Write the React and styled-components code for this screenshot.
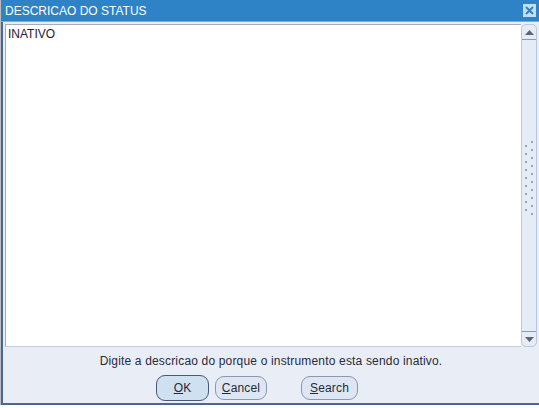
import React from "react";
import styled, { createGlobalStyle } from "styled-components";

const Global = createGlobalStyle`
  html, body { margin: 0; padding: 0; background: #ffffff; }
  body { font-family: "Liberation Sans", Arial, sans-serif; font-size: 12px; }
`;

const Window = styled.div`
  width: 539px;
  height: 405px;
  display: flex;
  flex-direction: column;
  box-sizing: border-box;
  border-left: 1px solid #b8bcc4;
`;

const TitleBar = styled.div`
  height: 21px;
  background: #2e82c6;
  display: flex;
  align-items: center;
  justify-content: space-between;
  padding: 0 3px 0 4px;
  color: #ffffff;
  font-size: 12px;
`;

const CloseBtn = styled.div`
  width: 13px;
  height: 13px;
  background: #c9ddf0;
  display: flex;
  align-items: center;
  justify-content: center;
`;

const Separator = styled.div`
  height: 1px;
  background: #9aa4ae;
`;

const Body = styled.div`
  flex: 1;
  background: #e9eef6;
  border-left: 2px solid #4a6693;
  border-bottom: 2px solid #4a6693;
  display: flex;
  flex-direction: column;
  padding: 2px 2px 0 2px;
`;

const EditRow = styled.div`
  display: flex;
  height: 323px;
`;

const TextBox = styled.div`
  flex: 1;
  background: #ffffff;
  border-top: 1px solid #a4acb8;
  border-left: 1px solid #a4acb8;
  border-bottom: 1px solid #c4ccd8;
  padding: 2px 2px;
  color: #262030;
  font-size: 12px;
`;

const ScrollBar = styled.div`
  width: 14px;
  background: #e6ecf5;
  border: 1px solid #b9c8dc;
  border-radius: 5px;
  display: flex;
  flex-direction: column;
  align-items: center;
`;

const ArrowBox = styled.div`
  height: 14px;
  width: 100%;
  display: flex;
  align-items: center;
  justify-content: center;
  border-bottom: ${(p) => (p.top ? "1px solid #8d98a8" : "none")};
  border-top: ${(p) => (p.top ? "none" : "1px solid #8d98a8")};
`;

const Track = styled.div`
  flex: 1;
  display: flex;
  align-items: flex-start;
  justify-content: center;
  padding-top: 101px;
`;

const Hint = styled.div`
  text-align: center;
  color: #2a2a3a;
  margin-top: 6px;
  height: 16px;
  line-height: 16px;
  font-size: 12px;
  letter-spacing: 0.17px;
`;

const ButtonRow = styled.div`
  display: flex;
  margin-top: 6px;
  padding-left: 151px;
  align-items: center;
`;

const Button = styled.div`
  box-sizing: border-box;
  width: ${(p) => p.w}px;
  height: ${(p) => (p.primary ? 26 : 24)}px;
  margin-left: ${(p) => p.ml || 0}px;
  border: 1px solid ${(p) => (p.primary ? "#47577a" : "#8a98b0")};
  border-radius: 9px;
  background: ${(p) => (p.primary ? "#cfe0f1" : "#dde6f2")};
  display: flex;
  align-items: center;
  justify-content: center;
  color: #262a38;
  font-size: 12px;
  letter-spacing: 0.15px;
  u { text-decoration: underline; }
`;

const Grip = () => (
  <svg width="12" height="76" viewBox="0 0 12 76">
    {Array.from({ length: 10 }).map((_, i) => (
      <g key={i}>
        <rect x="8" y={i * 8} width="2" height="2" fill="#8ea4c6" />
        <rect x="2" y={i * 8 + 4} width="2" height="2" fill="#8ea4c6" />
      </g>
    ))}
  </svg>
);

export default function App() {
  return (
    <>
      <Global />
      <Window>
        <TitleBar>
          <span>DESCRICAO DO STATUS</span>
          <CloseBtn>
            <svg width="9" height="9" viewBox="0 0 9 9">
              <path d="M1 1 L8 8 M8 1 L1 8" stroke="#2e82c6" strokeWidth="2" />
            </svg>
          </CloseBtn>
        </TitleBar>
        <Separator />
        <Body>
          <EditRow>
            <TextBox>INATIVO</TextBox>
            <ScrollBar>
              <ArrowBox top>
                <svg width="9" height="5" viewBox="0 0 9 5">
                  <path d="M0 5 L4.5 0 L9 5 Z" fill="#5c6678" />
                </svg>
              </ArrowBox>
              <Track>
                <Grip />
              </Track>
              <ArrowBox>
                <svg width="9" height="5" viewBox="0 0 9 5">
                  <path d="M0 0 L4.5 5 L9 0 Z" fill="#5c6678" />
                </svg>
              </ArrowBox>
            </ScrollBar>
          </EditRow>
          <Hint>Digite a descricao do porque o instrumento esta sendo inativo.</Hint>
          <ButtonRow>
            <Button primary w={53}><span><u>O</u>K</span></Button>
            <Button w={52} ml={6}><span><u>C</u>ancel</span></Button>
            <Button w={57} ml={34}><span><u>S</u>earch</span></Button>
          </ButtonRow>
        </Body>
      </Window>
    </>
  );
}
